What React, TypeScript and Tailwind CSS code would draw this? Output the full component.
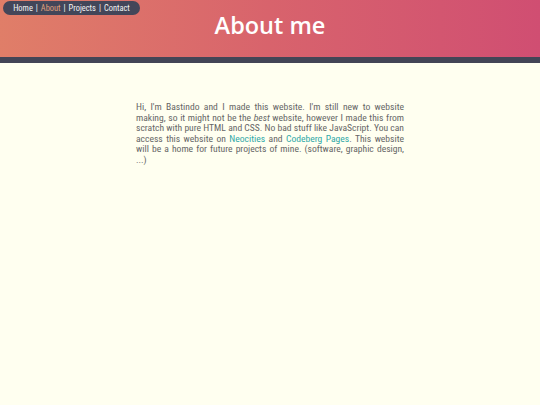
export default function App() {
  return (
    <div className="min-h-[405px] bg-[#fffff0] font-['Liberation_Sans_Narrow','Roboto_Condensed',Roboto,sans-serif]">
      <header className="relative h-[57px] bg-gradient-to-r from-[#e07e68] via-[#d8636c] to-[#d04e72] flex justify-center">
        <nav className="absolute left-[3px] top-[1px] h-[14px] w-[137px] rounded-[7px] bg-[#434659] flex items-center justify-center text-[8.4px] text-[#f3f3f3] leading-none">
          <a>Home</a>
          <span className="mx-[3px]">|</span>
          <a className="text-[#e0a07c]">About</a>
          <span className="mx-[3px]">|</span>
          <a>Projects</a>
          <span className="mx-[3px]">|</span>
          <a>Contact</a>
        </nav>
        <h1 className="mt-[11px] font-['Open_Sans',sans-serif] text-[23.5px] leading-[28px] font-semibold text-white">About me</h1>
      </header>
      <div className="h-[6px] bg-[#434556]" />
      <main className="mx-auto w-[268px] pt-[39px]">
        <p className="text-[9.6px] leading-[10.6px] text-[#666] text-justify">
          Hi, I'm Bastindo and I made this website. I'm still new to website making, so it might not be the <em>best</em> website, however I made this from scratch with pure HTML and CSS. No bad stuff like JavaScript. You can access this website on <a className="text-[#2fa8a8]">Neocities</a> and <a className="text-[#2fa8a8]">Codeberg Pages</a>. This website will be a home for future projects of mine. (software, graphic design, ...)
        </p>
      </main>
    </div>
  );
}
